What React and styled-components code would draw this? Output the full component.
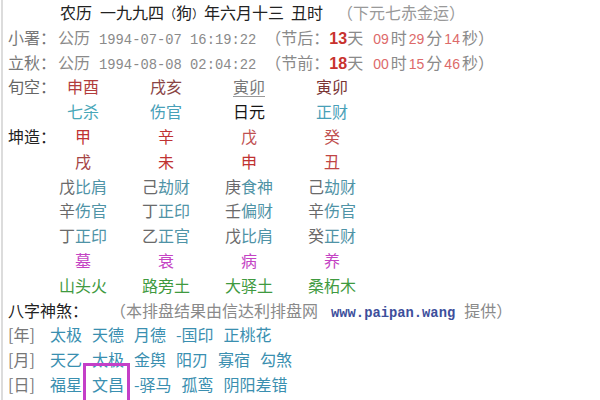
import React from 'react';
import styled, { createGlobalStyle } from 'styled-components';

const GlobalStyle = createGlobalStyle`
  html, body {
    margin: 0;
    padding: 0;
    background: #ffffff;
  }
  body {
    font-family: "Noto Sans CJK SC", "Noto Sans", sans-serif;
  }
`;

const Page = styled.div`
  width: 597px;
  height: 400px;
  overflow: hidden;
  margin-left: 1px;
  padding-left: 5px;
  border-left: 2px solid #dcdcdc;
  box-sizing: border-box;
  font-size: 16px;
  line-height: 24.8px;
  color: #222;
  white-space: nowrap;
`;

const Line = styled.div`
  height: 24.8px;
  padding-left: ${p => p.indent || 0}px;
`;

const Gap = styled.span`
  display: inline-block;
  width: ${p => p.w}px;
`;

const Label = styled.span`
  display: inline-block;
  width: ${p => p.w || 50}px;
  color: ${p => p.color || '#777'};
`;

const Grey = styled.span`
  color: ${p => p.color || '#8a8a8a'};
`;

const Mono = styled.span`
  font-family: "Liberation Mono", monospace;
  font-size: 13.8px;
  color: #8a8a8a;
  margin: 0 ${p => p.gap || 0}px;
`;

const Count = styled.span`
  color: ${p => (p.strong ? '#c8322e' : '#dd6a6a')};
  font-family: "Liberation Sans", sans-serif;
  font-weight: ${p => (p.strong ? 700 : 400)};
  font-size: ${p => (p.strong ? 16 : 14)}px;
  margin: 0 ${p => (p.strong ? 0 : 2)}px 0 ${p => p.lead || (p.strong ? 0 : 2)}px;
`;

const Paren = styled.span`
  font-size: 12px;
`;

const Grid = styled.div`
  display: grid;
  grid-template-columns: 33.5px repeat(4, 83px);
  height: 24.8px;
`;

const RowLabel = styled.div`
  overflow: visible;
  color: ${p => p.color || '#666'};
`;

const Cell = styled.div`
  text-align: center;
  color: ${p => p.color || '#222'};
  text-decoration: ${p => (p.under ? 'underline' : 'none')};
  text-decoration-color: #999;
  text-underline-offset: 3px;
`;

const Stem = styled.span`
  color: #6a6a6a;
`;

const God = styled.span`
  color: #4f93a6;
`;

const Link = styled.span`
  font-family: "Liberation Mono", monospace;
  font-size: 13.8px;
  font-weight: 700;
  color: #3d4f9c;
  margin: 0 9px 0 13px;
`;

const Items = styled.span`
  display: inline-flex;
  gap: 10px;
`;

const Item = styled.span`
  position: relative;
  color: #3a8fb0;
  &::after {
    content: '';
    display: ${p => (p.marked ? 'block' : 'none')};
    position: absolute;
    left: -9px;
    right: -6px;
    top: -9px;
    bottom: -8px;
    border: 3px solid #c43fc8;
  }
`;

const voids = [
  { t: '申酉', c: '#b23c3c' },
  { t: '戌亥', c: '#8a4545' },
  { t: '寅卯', c: '#777777', u: true },
  { t: '寅卯', c: '#7a3535' },
];

const gods = [
  { t: '七杀', c: '#48a7b8' },
  { t: '伤官', c: '#48a0b8' },
  { t: '日元', c: '#151515' },
  { t: '正财', c: '#48a0b8' },
];

const stems = [
  { t: '甲', c: '#c03232' },
  { t: '辛', c: '#c03232' },
  { t: '戊', c: '#c05050' },
  { t: '癸', c: '#c05050' },
];

const branches = [
  { t: '戌', c: '#a54444' },
  { t: '未', c: '#c03232' },
  { t: '申', c: '#c03232' },
  { t: '丑', c: '#c04545' },
];

const hidden = [
  [['戊', '比肩'], ['己', '劫财'], ['庚', '食神'], ['己', '劫财']],
  [['辛', '伤官'], ['丁', '正印'], ['壬', '偏财'], ['辛', '伤官']],
  [['丁', '正印'], ['乙', '正官'], ['戊', '比肩'], ['癸', '正财']],
];

const stages = ['墓', '衰', '病', '养'];
const sounds = ['山头火', '路旁土', '大驿土', '桑柘木'];

const shensha = [
  { k: '年', v: ['太极', '天德', '月德', '-国印', '正桃花'] },
  { k: '月', v: ['天乙', '太极', '金舆', '阳刃', '寡宿', '勾煞'] },
  { k: '日', v: ['福星', '文昌', '-驿马', '孤鸾', '阴阳差错'], mark: '文昌' },
];

const App = () => {
  return (
    <>
      <GlobalStyle />
      <Page>
        <Line indent={52}>
          农历<Gap w={8} />一九九四<Paren>（</Paren>狗<Paren>）</Paren>年六月十三<Gap w={7} />丑时<Gap w={14} />
          <Grey color="#999">（下元七赤金运）</Grey>
        </Line>
        <Line>
          <Label>小署：</Label>
          <Grey>公历</Grey>
          <Mono gap={9}>1994-07-07 16:19:22</Mono>
          <Grey>（节后：<Count strong>13</Count>天<Count lead={10}>09</Count>时<Count>29</Count>分<Count>14</Count>秒）</Grey>
        </Line>
        <Line>
          <Label>立秋：</Label>
          <Grey>公历</Grey>
          <Mono gap={9}>1994-08-08 02:04:22</Mono>
          <Grey>（节前：<Count strong>18</Count>天<Count lead={10}>00</Count>时<Count>15</Count>分<Count>46</Count>秒）</Grey>
        </Line>
        <Grid>
          <RowLabel>旬空：</RowLabel>
          {voids.map((v, i) => <Cell key={i} color={v.c} under={v.u}>{v.t}</Cell>)}
        </Grid>
        <Grid>
          <RowLabel />
          {gods.map((g, i) => <Cell key={i} color={g.c}>{g.t}</Cell>)}
        </Grid>
        <Grid>
          <RowLabel color="#222">坤造：</RowLabel>
          {stems.map((s, i) => <Cell key={i} color={s.c}>{s.t}</Cell>)}
        </Grid>
        <Grid>
          <RowLabel />
          {branches.map((b, i) => <Cell key={i} color={b.c}>{b.t}</Cell>)}
        </Grid>
        {hidden.map((row, r) => (
          <Grid key={r}>
            <RowLabel />
            {row.map(([s, g], i) => (
              <Cell key={i}><Stem>{s}</Stem><God>{g}</God></Cell>
            ))}
          </Grid>
        ))}
        <Grid>
          <RowLabel />
          {stages.map((s, i) => <Cell key={i} color="#c444c4">{s}</Cell>)}
        </Grid>
        <Grid>
          <RowLabel />
          {sounds.map((s, i) => <Cell key={i} color="#3f9a3f">{s}</Cell>)}
        </Grid>
        <Line>
          <Label w={102} color="#222">八字神煞：</Label>
          <Grey>（本排盘结果由信达利排盘网</Grey>
          <Link>www.paipan.wang</Link>
          <Grey>提供）</Grey>
        </Line>
        {shensha.map(row => (
          <Line key={row.k}>
            <Label w={42}>[{row.k}]</Label>
            <Items>
              {row.v.map(v => <Item key={v} marked={v === row.mark}>{v}</Item>)}
            </Items>
          </Line>
        ))}
      </Page>
    </>
  );
};

export default App;
